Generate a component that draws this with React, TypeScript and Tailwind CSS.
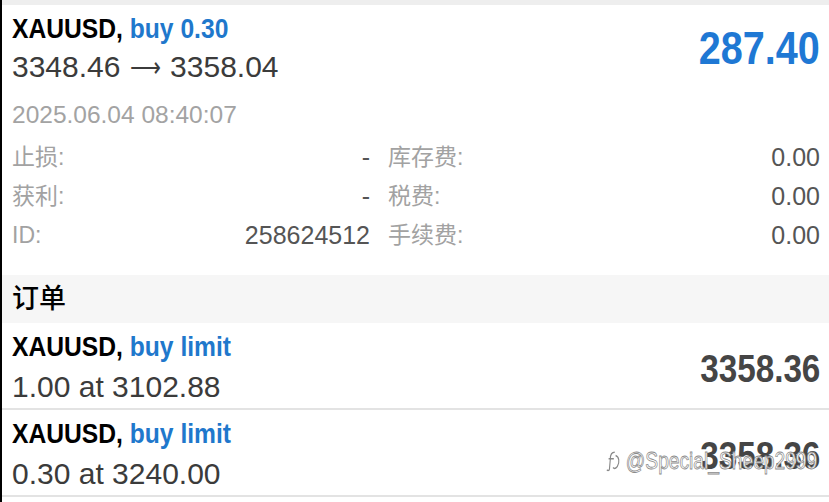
import React from "react";

const bold = "font-['Liberation_Sans',Arial,sans-serif] font-bold";
const cjk = "font-['Liberation_Sans','Noto_Sans_CJK_SC',sans-serif]";

function DetailRow({ l1, v1, l2, v2 }: { l1: string; v1: string; l2: string; v2: string }) {
  return (
    <div className="flex h-[39px] items-center leading-none">
      <div className="flex w-[358px] items-center justify-between">
        <span className="text-[23px] text-[#a2a2a2]">{l1}</span>
        <span className="text-[25px] text-[#555]">{v1}</span>
      </div>
      <div className="ml-[18px] flex flex-1 items-center justify-between">
        <span className="text-[23px] text-[#a2a2a2]">{l2}</span>
        <span className="text-[25px] text-[#555]">{v2}</span>
      </div>
    </div>
  );
}

function OrderRow({ lots, price, current }: { lots: string; price: string; current: string }) {
  return (
    <div className="flex h-[87px] items-start justify-between border-b-2 border-[#e3e3e3] pl-[10px] pr-[9px]">
      <div className="flex flex-col pt-[7px]">
        <div className={`${bold} origin-left scale-x-[0.88] whitespace-nowrap text-[28px] leading-[34px]`}>
          <span className="text-black">XAUUSD, </span>
          <span className="text-[#1f78cc]">buy limit</span>
        </div>
        <div className="mt-[6px] text-[30px] leading-[34px] text-[#3b3b3b]">
          {lots} at {price}
        </div>
      </div>
      <div className={`${bold} mt-[27px] origin-right scale-x-[0.875] text-[38px] leading-none text-[#454545]`}>{current}</div>
    </div>
  );
}

export default function App() {
  return (
    <div className={`${cjk} relative h-[502px] w-[829px] overflow-hidden border-l-2 border-black bg-white`}>
      <div className="h-[5px] bg-[#eeeeee]" />
      <div className="flex justify-between pl-[10px] pr-[9px] pt-[8px]">
        <div className="flex flex-col">
          <div className={`${bold} origin-left scale-x-[0.88] whitespace-nowrap text-[28px] leading-[32px]`}>
            <span className="text-black">XAUUSD, </span>
            <span className="text-[#1f78cc]">buy 0.30</span>
          </div>
          <div className="mt-[5px] whitespace-nowrap text-[30px] leading-[34px] text-[#3b3b3b]">
            3348.46 <span className="mx-[-5px] inline-block scale-x-[0.72]">⟶</span> 3358.04
          </div>
          <div className="mt-[17px] text-[24.5px] leading-[28px] text-[#a3a3a3]">2025.06.04 08:40:07</div>
        </div>
        <div className={`${bold} mt-[12px] origin-right scale-x-[0.86] text-[46px] leading-none text-[#1f78d4]`}>287.40</div>
      </div>
      <div className="mt-[9px] pl-[10px] pr-[9px]">
        <DetailRow l1="止损:" v1="-" l2="库存费:" v2="0.00" />
        <DetailRow l1="获利:" v1="-" l2="税费:" v2="0.00" />
        <DetailRow l1="ID:" v1="258624512" l2="手续费:" v2="0.00" />
      </div>
      <div className="mt-[20px] flex h-[48px] items-center bg-[#f6f6f6] pl-[10px] text-[27px] font-medium text-black">订单</div>
      <OrderRow lots="1.00" price="3102.88" current="3358.36" />
      <OrderRow lots="0.30" price="3240.00" current="3358.36" />
      <div className="absolute right-[12px] top-[443px] flex origin-right scale-x-[0.8] items-center gap-[4px] font-['Liberation_Sans',sans-serif] text-[24px] text-white [-webkit-text-stroke:0.8px_#8a8a8a]">
        <svg width="22" height="24" viewBox="0 0 20 22" fill="none" stroke="#8a8a8a" strokeWidth="1.3">
          <path d="M11 3 C7 3 6 6 6 9 L5 18 C5 20 3 20 2 19" />
          <path d="M4 9 L10 9" />
          <path d="M12 6 C16 7 17 12 14 16 C12 18 10 18 9 17" />
        </svg>
        <span>@Special_Sheep2999</span>
      </div>
    </div>
  );
}
